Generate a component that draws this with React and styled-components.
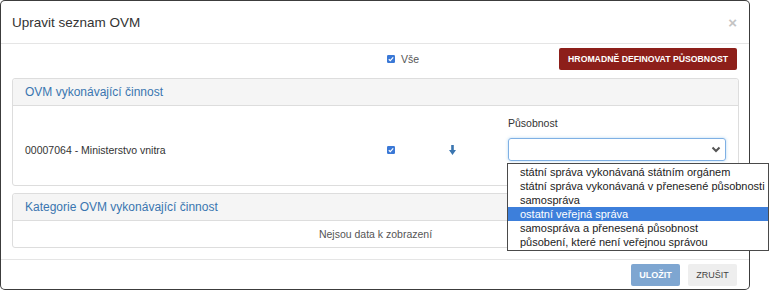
import styled, { createGlobalStyle } from "styled-components";

const GlobalStyle = createGlobalStyle`
  html, body {
    margin: 0;
    padding: 0;
    background: #ffffff;
    font-family: "Liberation Sans", Arial, sans-serif;
    color: #333;
  }
`;

const Page = styled.div`
  width: 769px;
  height: 291px;
  padding: 1px 0 0 1px;
  box-sizing: border-box;
  overflow: hidden;
`;

const Modal = styled.div`
  position: relative;
  width: 748px;
  height: 288px;
  box-sizing: border-box;
  background: #fff;
  border-radius: 4px;
  box-shadow: 0 0 0 1px #3c3c3c;
  display: flex;
  flex-direction: column;
`;

const Header = styled.div`
  height: 43px;
  flex-shrink: 0;
  box-sizing: border-box;
  border-bottom: 1px solid #e5e5e5;
  padding: 0 11px;
  display: flex;
  align-items: center;
  justify-content: space-between;
`;

const Title = styled.h4`
  margin: 0;
  font-size: 13.5px;
  font-weight: normal;
  color: #333;
  line-height: 19px;
`;

const Close = styled.span`
  font-size: 15px;
  font-weight: bold;
  color: #c4c4c4;
  line-height: 1;
  margin-right: 1px;
`;

const Body = styled.div`
  padding: 4px 11px 10px 11px;
  flex: 1;
`;

const TopRow = styled.div`
  display: grid;
  grid-template-columns: 375px 1fr auto;
  align-items: center;
  margin-bottom: 8px;
`;

const CheckLabel = styled.label`
  display: flex;
  align-items: center;
  gap: 6px;
  font-size: 10.5px;
  color: #555;
`;

const DangerButton = styled.button`
  height: 22px;
  padding: 0 9px;
  border: none;
  border-radius: 2px;
  background: #8d1f1a;
  color: #fff;
  font-family: inherit;
  font-size: 8.7px;
  font-weight: bold;
  text-transform: uppercase;
  margin-right: 1px;
`;

const Panel = styled.div`
  border: 1px solid #ddd;
  border-radius: 3px;
  margin-bottom: ${(p) => p.$gap || 0}px;
  width: 725px;
`;

const PanelHeading = styled.div`
  height: 27px;
  box-sizing: border-box;
  background: #f5f5f5;
  border-bottom: 1px solid #ddd;
  padding: 0 12px;
  display: flex;
  align-items: center;
  font-size: 12px;
  color: #3a75b0;
  border-radius: 3px 3px 0 0;
`;

const PanelBody = styled.div`
  padding: ${(p) => (p.$compact ? "6px 12px 5px 12px" : "10px 12px 24px 12px")};
`;

const OvmRow = styled.div`
  display: grid;
  grid-template-columns: 362px 62px 59px 1fr;
  align-items: end;
  font-size: 10.5px;
`;

const Cell = styled.div`
  height: 23px;
  display: flex;
  align-items: center;
`;

const Field = styled.div`
  position: relative;
  display: flex;
  flex-direction: column;
`;

const FieldLabel = styled.div`
  line-height: 15px;
  margin-bottom: 7px;
  color: #333;
`;

const Select = styled.div`
  height: 23px;
  box-sizing: border-box;
  border: 1px solid #7fb0e4;
  border-radius: 3px;
  box-shadow: 0 0 3px rgba(102, 175, 233, 0.5);
  display: flex;
  align-items: center;
  justify-content: flex-end;
  padding-right: 4px;
`;

const Options = styled.ul`
  position: absolute;
  left: -1px;
  top: calc(100% + 2px);
  width: 262px;
  margin: 0;
  padding: 1px 0;
  list-style: none;
  background: #fff;
  border: 1px solid #4a4a4a;
  box-sizing: border-box;
  z-index: 2;
`;

const Option = styled.li`
  height: 14px;
  line-height: 14px;
  padding-left: 12px;
  font-size: 11px;
  white-space: nowrap;
  color: ${(p) => (p.$active ? "#fff" : "#222")};
  background: ${(p) => (p.$active ? "#3d7fdb" : "transparent")};
`;

const Empty = styled.div`
  text-align: center;
  font-size: 10.5px;
  line-height: 15px;
  color: #555;
`;

const Footer = styled.div`
  flex-shrink: 0;
  border-top: 1px solid #e5e5e5;
  padding: 4px 11px 3px 11px;
  display: flex;
  justify-content: flex-end;
  gap: 8px;
`;

const FooterButton = styled.button`
  width: 49px;
  height: 22px;
  border: none;
  border-radius: 2px;
  font-family: inherit;
  font-size: 9px;
  font-weight: ${(p) => (p.$primary ? "bold" : "normal")};
  background: ${(p) => (p.$primary ? "#7ea6d1" : "#eeeeee")};
  color: ${(p) => (p.$primary ? "#fff" : "#444")};
  margin-right: ${(p) => (p.$last ? "1px" : "0")};
`;

const CheckBox = () => (
  <svg width="8" height="8" viewBox="0 0 8 8">
    <rect x="0" y="0" width="8" height="8" rx="1.2" fill="#3a78d6" />
    <path d="M1.8 4.2 L3.3 5.6 L6.2 2.4" fill="none" stroke="#fff" strokeWidth="1.2" />
  </svg>
);

const ArrowDown = () => (
  <svg width="7" height="10" viewBox="0 0 7 10">
    <path d="M2.2 0 H4.8 V5 H7 L3.5 10 L0 5 H2.2 Z" fill="#3a75b0" />
  </svg>
);

const Chevron = () => (
  <svg width="10" height="7" viewBox="0 0 10 7">
    <path d="M1.5 1.5 L5 5 L8.5 1.5" fill="none" stroke="#555" strokeWidth="2" />
  </svg>
);

const options = [
  "státní správa vykonávaná státním orgánem",
  "státní správa vykonávaná v přenesené působnosti",
  "samospráva",
  "ostatní veřejná správa",
  "samospráva a přenesená působnost",
  "působení, které není veřejnou správou",
];

const App = () => {
  return (
    <Page>
      <GlobalStyle />
      <Modal>
        <Header>
          <Title>Upravit seznam OVM</Title>
          <Close>×</Close>
        </Header>
        <Body>
          <TopRow>
            <div />
            <CheckLabel>
              <CheckBox /> Vše
            </CheckLabel>
            <DangerButton>Hromadně definovat působnost</DangerButton>
          </TopRow>
          <Panel $gap={7}>
            <PanelHeading>OVM vykonávající činnost</PanelHeading>
            <PanelBody>
              <OvmRow>
                <Cell>00007064 - Ministerstvo vnitra</Cell>
                <Cell>
                  <CheckBox />
                </Cell>
                <Cell>
                  <ArrowDown />
                </Cell>
                <Field>
                  <FieldLabel>Působnost</FieldLabel>
                  <Select>
                    <Chevron />
                  </Select>
                  <Options>
                    {options.map((o, i) => (
                      <Option key={o} $active={i === 3}>
                        {o}
                      </Option>
                    ))}
                  </Options>
                </Field>
              </OvmRow>
            </PanelBody>
          </Panel>
          <Panel>
            <PanelHeading>Kategorie OVM vykonávající činnost</PanelHeading>
            <PanelBody $compact>
              <Empty>Nejsou data k zobrazení</Empty>
            </PanelBody>
          </Panel>
        </Body>
        <Footer>
          <FooterButton $primary>ULOŽIT</FooterButton>
          <FooterButton $last>ZRUŠIT</FooterButton>
        </Footer>
      </Modal>
    </Page>
  );
};

export default App;
